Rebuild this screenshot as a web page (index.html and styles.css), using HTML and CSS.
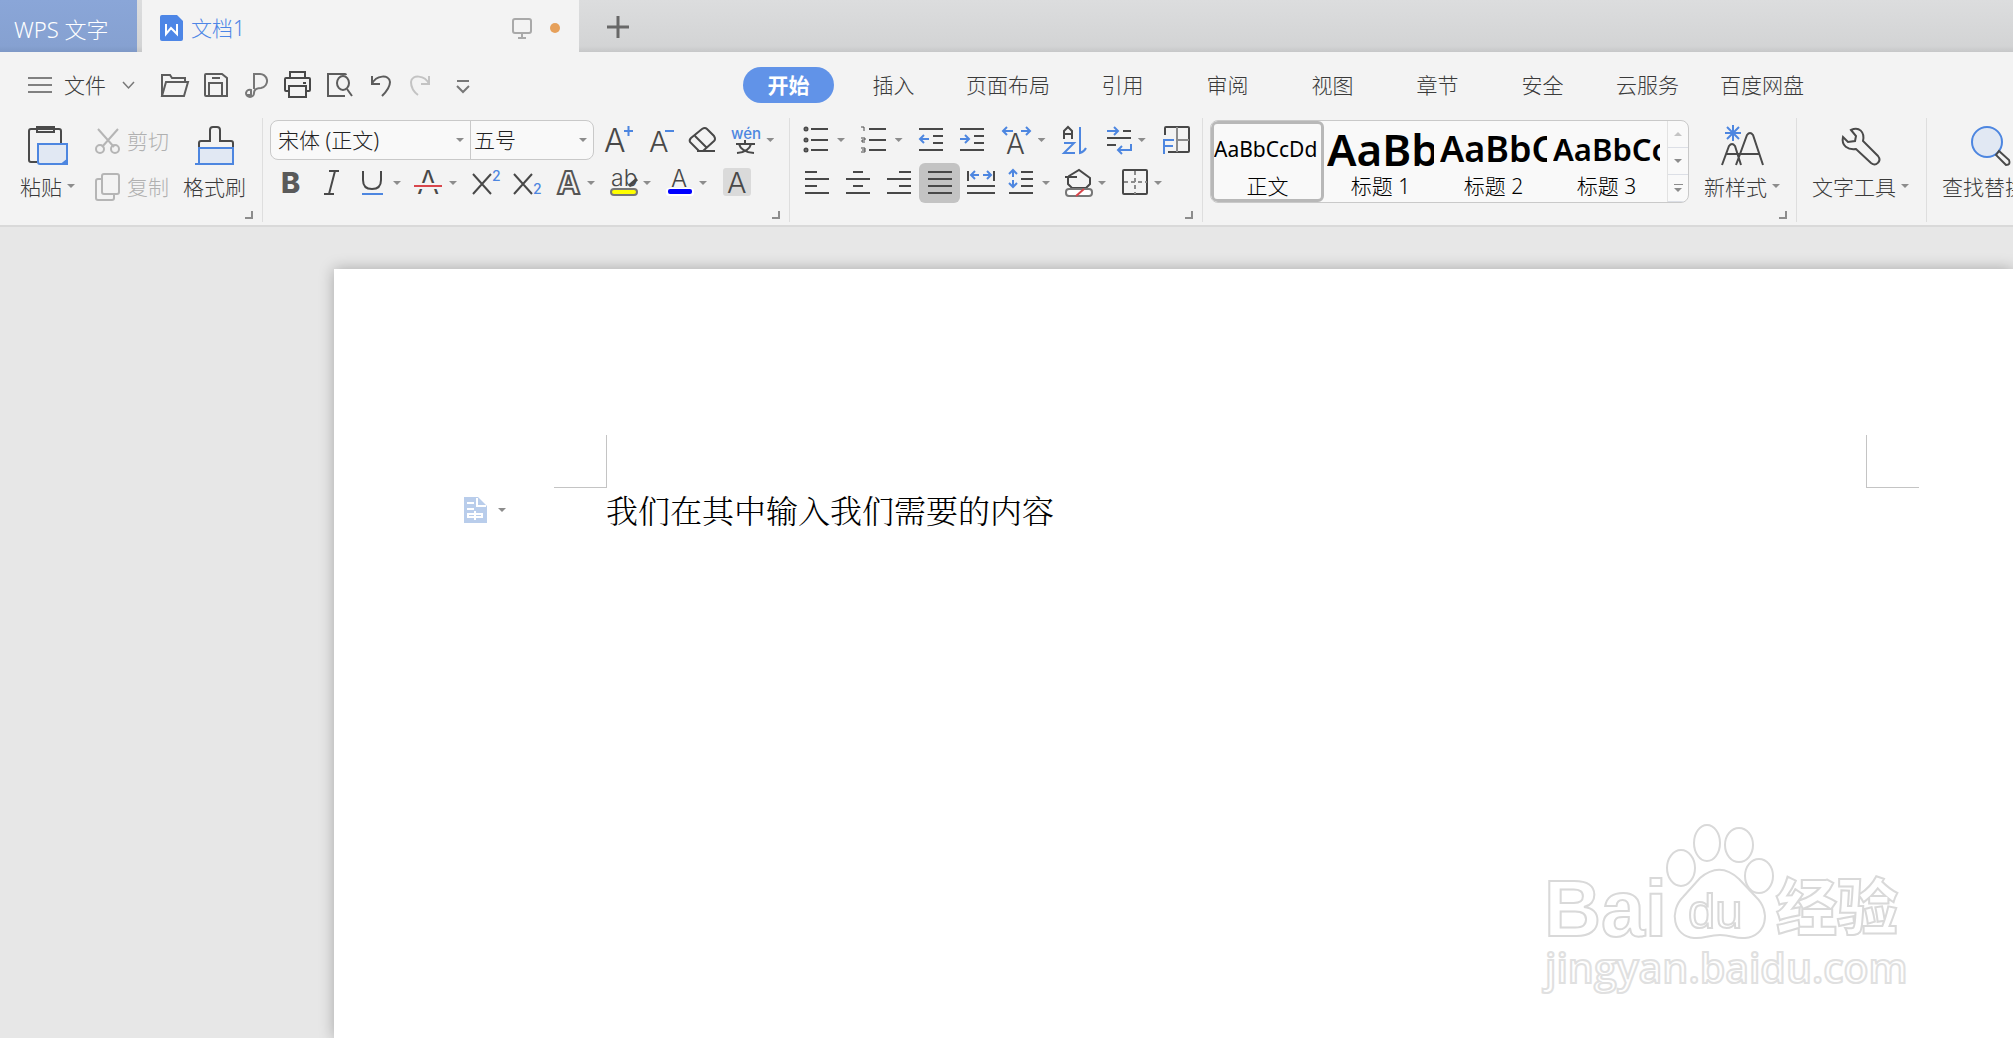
FILE: index.html
```html
<!DOCTYPE html>
<html lang="zh-CN">
<head>
<meta charset="utf-8">
<title>文档1 - WPS 文字</title>
<link rel="stylesheet" href="styles.css">
</head>
<body>
<header class="titlebar">
  <button class="app-tab">WPS 文字</button>
  <div class="doc-tab">
    <svg class="doc-logo" width="24" height="27" viewBox="0 0 24 27"><path fill="#4d86e6" d="M2 0h15l6 6v18a2 2 0 0 1-2 2H2a2 2 0 0 1-2-2V2a2 2 0 0 1 2-2z"/><path d="M6 9v10l5-6 6 6V9" fill="none" stroke="#fff" stroke-width="2"/></svg>
    <span class="doc-name">文档1</span>
    <svg class="monitor" width="21" height="21" viewBox="0 0 21 21" fill="none" stroke="#a9a9a9" stroke-width="2"><rect x="1" y="1" width="18" height="14" rx="2"/><path d="M10 15v5M6 20h8"/></svg>
    <span class="dot"></span>
  </div>
  <button class="new-tab" aria-label="新建"><svg width="22" height="22" viewBox="0 0 22 22"><path d="M11 0v22M0 11h22" stroke="#686868" stroke-width="3"/></svg></button>
</header>

<nav class="menubar">
  <div class="quick">
    <button class="file"><svg width="24" height="18" viewBox="0 0 24 18" stroke="#808080" stroke-width="2"><path d="M0 2h24M0 9h24M0 16h24"/></svg>文件<svg width="13" height="8" viewBox="0 0 13 8" fill="none" stroke="#777" stroke-width="1.5"><path d="M1 1l5.500 6L12 1"/></svg></button>
    <div class="quick-icons">
      <button aria-label="打开"><svg viewBox="0 0 28 28"><path d="M2 25V4h8l2 3h13v4M2 25L6 11h22l-4 14z"/></svg></button>
      <button aria-label="保存"><svg viewBox="0 0 28 28"><path d="M5 3h16l5 4v18H5q-1 0-1-1V4q0-1 1-1zM8 25V12h13v13M11 7h8"/></svg></button>
      <button aria-label="输出为PDF"><svg viewBox="0 0 28 28"><path stroke="#777" d="M12 18V3h5a7 7 0 0 1 2 14q-7 0-7 5a4 4 0 1 1-8 0q1-4 5-3v5H5"/></svg></button>
      <button aria-label="打印"><svg viewBox="0 0 28 28"><path stroke="#484848" d="M7 7V1h15v6M6 20H3q-1 0-1-1V8q0-1 1-1h23q1 0 1 1v11q0 1-1 1h-3M20 12h3M6 15h17v11H6z"/></svg></button>
      <button aria-label="打印预览"><svg viewBox="0 0 28 28"><path d="M22 4q0-1-1-1H4v22h17M23 18l5 7"/><ellipse cx="19" cy="12" rx="6" ry="7"/></svg></button>
      <button aria-label="撤销"><svg viewBox="0 0 28 28"><path d="M7 5v8h8M7 13c4-9 17-10 18-2 0 5-4 10-8 14"/></svg></button>
      <button aria-label="恢复"><svg viewBox="0 0 28 28"><path stroke="#c3c3c3" d="M23 5v8h-8M23 13C19 4 6 3 5 11c0 5 3 10 7 13"/></svg></button>
      <button aria-label="更多"><svg viewBox="0 0 28 28"><path stroke="#777" d="M10 10h12M10 15l6 6 6-6"/></svg></button>
    </div>
  </div>
  <div class="tabs">
    <button class="tab active"><span>开始</span></button>
    <button class="tab">插入</button>
    <button class="tab">页面布局</button>
    <button class="tab">引用</button>
    <button class="tab">审阅</button>
    <button class="tab">视图</button>
    <button class="tab">章节</button>
    <button class="tab">安全</button>
    <button class="tab">云服务</button>
    <button class="tab">百度网盘</button>
  </div>
</nav>

<section class="ribbon">
  <div class="group clipboard">
    <button class="big paste"><svg width="42" height="40" viewBox="0 0 42 40"><path fill="none" stroke="#4a4a4a" stroke-width="2" d="M10 36H4a2 2 0 0 1-2-2V5a2 2 0 0 1 2-2h28a2 2 0 0 1 2 2v13M10 1h17v5H10z"/><path fill="#e1e8f3" stroke="#4d86e0" stroke-width="2" d="M11 18h29v16l-5 4H13a2 2 0 0 1-2-2z"/><path fill="#4d86e0" d="M41 33v6h-7z"/></svg><span>粘贴<i class="caret"></i></span></button>
    <div class="stack">
      <button class="small"><svg width="26" height="28" viewBox="0 0 26 28" fill="none" stroke="#b5b5b5" stroke-width="2"><path d="M3 2l16 18M23 2L7 20"/><circle cx="5" cy="22" r="4"/><circle cx="20" cy="22" r="4"/></svg>剪切</button>
      <button class="small"><svg width="26" height="28" viewBox="0 0 26 28" fill="none" stroke="#b5b5b5" stroke-width="2"><rect x="7" y="1" width="17" height="20" rx="2"/><path d="M7 6H3a2 2 0 0 0-2 2v17a2 2 0 0 0 2 2h14q2 0 2-2v-4"/></svg>复制</button>
    </div>
    <button class="big brush"><svg width="40" height="40" viewBox="0 0 40 40"><path fill="none" stroke="#4a4a4a" stroke-width="2" d="M4 22v-5q0-2 2-2h9V4q0-3 3-3h4q3 0 3 3v11h11q2 0 2 2v5"/><path fill="#e1e8f3" stroke="none" d="M4 22h34v16H4z"/><path fill="none" stroke="#4d86e0" stroke-width="2" d="M0 38h38V22H4v16"/></svg><span>格式刷</span></button>
    <i class="launcher"></i>
  </div>

  <div class="group font-group">
    <div class="tools">
      <div class="combos">
        <label class="combo family"><select aria-label="字体"><option>宋体 (正文)</option></select><i class="caret"></i></label>
        <label class="combo size"><select aria-label="字号"><option>五号</option></select><i class="caret"></i></label>
      </div>
      <button class="tool wide" aria-label="增大字号"><svg viewBox="0 0 28 28"><text x="-2" y="26" font-size="32">A</text><path class="b" d="M18 5h9M22.500 0v10"/></svg></button>
      <button class="tool wide" aria-label="减小字号"><svg viewBox="0 0 28 28"><text x="1" y="26" font-size="29">A</text><path class="b" d="M17 5h9"/></svg></button>
      <button class="tool wide" aria-label="清除格式"><svg viewBox="0 0 28 28"><path d="M10 25l-9-9q-1-2 1-4L13 3q3-2 5 0l7 7q2 3 0 5L14 25H10M6 10l12 12M8 25h18"/></svg></button>
      <button class="tool split wide" aria-label="拼音指南"><svg viewBox="0 0 28 28"><text class="bt" x="0" y="13" font-size="15">wén</text><path d="M5 18h19M14 14v4M6 27q12-1 14-9M8 18q2 8 15 9"/></svg><i class="caret"></i></button>
    </div>
    <div class="tools">
      <button class="tool" aria-label="加粗"><svg viewBox="0 0 28 28"><text x="4" y="24" font-size="29" class="heavy">B</text></svg></button>
      <button class="tool" aria-label="倾斜"><svg viewBox="0 0 28 28"><path d="M11 2h10M6 25h10M17 2l-6 23"/></svg></button>
      <button class="tool split" aria-label="下划线"><svg viewBox="0 0 28 28"><path d="M5 2v9q0 9 9 9t9-9V2"/><path class="b" d="M4 25h21"/></svg><i class="caret"></i></button>
      <button class="tool split" aria-label="删除线"><svg viewBox="0 0 28 28"><text x="3" y="25" font-size="33">A</text><path d="M-1 17h30" class="gap"/><path d="M0 17h28" class="strike"/></svg><i class="caret"></i></button>
      <button class="tool" aria-label="上标"><svg viewBox="0 0 28 28"><path d="M2 5l18 20M20 5L2 25"/><text class="bt" x="21" y="12" font-size="14">2</text></svg></button>
      <button class="tool" aria-label="下标"><svg viewBox="0 0 28 28"><path d="M2 5l18 20M20 5L2 25"/><text class="bt" x="21" y="25" font-size="14">2</text></svg></button>
      <button class="tool split" aria-label="文字效果"><svg viewBox="0 0 28 28"><text x="5" y="25" font-size="31" class="outline">A</text></svg><i class="caret"></i></button>
      <button class="tool split" aria-label="突出显示"><svg viewBox="0 0 28 28"><text x="3" y="17" font-size="23">ab</text><path d="M21 17l8-7" class="nib"/><rect x="3" y="20" width="26" height="6" rx="3" class="marker"/></svg><i class="caret"></i></button>
      <button class="tool split" aria-label="字体颜色"><svg viewBox="0 0 28 28"><text x="7" y="18" font-size="24">A</text><rect x="2" y="19" width="28" height="8" rx="3" class="blank"/><rect x="4" y="20" width="24" height="5" rx="2" class="ink"/></svg><i class="caret"></i></button>
      <button class="tool" aria-label="字符底纹"><svg viewBox="0 0 28 28"><rect x="2" y="-1" width="28" height="28" rx="3" class="shade"/><text x="6" y="24" font-size="29">A</text></svg></button>
    </div>
    <i class="launcher"></i>
  </div>

  <div class="group para-group">
    <div class="tools loose">
      <button class="tool split" aria-label="项目符号"><svg viewBox="0 0 28 28"><path d="M9 3h17M9 14h17M9 24h17"/><circle cx="4" cy="3" r="1.500"/><circle cx="4" cy="14" r="1.500"/><circle cx="4" cy="24" r="1.500"/></svg><i class="caret"></i></button>
      <button class="tool split" aria-label="编号"><svg viewBox="0 0 28 28"><path d="M9 3h17M9 14h17M9 24h17"/><path class="thin" d="M1 1h3v4M1 12h4v2H2v2h3M1 22h4v4H1M2 24h3" /></svg><i class="caret"></i></button>
      <button class="tool" aria-label="减少缩进"><svg viewBox="0 0 28 28"><path d="M1 3h24M15 10h10M15 17h10M1 24h24"/><path class="b" d="M11 13H2M6 9l-4 4 4 4"/></svg></button>
      <button class="tool" aria-label="增加缩进"><svg viewBox="0 0 28 28"><path d="M0 3h24M14 10h10M14 17h10M0 24h24"/><path class="b" d="M0 13h9M5 9l4 4-4 4"/></svg></button>
      <button class="tool split" aria-label="字符缩放"><svg viewBox="0 0 28 28"><text x="3" y="28" font-size="28">A</text><path class="b" d="M10 5H0M4 1L0 5l4 4M18 5h9M23 1l4 4-4 4"/></svg><i class="caret"></i></button>
      <button class="tool" aria-label="排序"><svg viewBox="0 0 28 28"><path d="M4 13V5l4-4 4 4v8M4 8h8"/><path class="b" d="M4 17h10L4 27h11M20 1v26q4-1 6-5"/></svg></button>
      <button class="tool split" aria-label="显示标记"><svg viewBox="0 0 28 28"><path d="M20 5h8M4 12h24M4 19h9"/><path class="b" d="M4 5h11M11 1l4 4-4 4M28 18v6H15M19 20l-4 4 4 4"/></svg><i class="caret"></i></button>
      <button class="tool" aria-label="表格工具"><svg viewBox="0 0 28 28"><path d="M4 9V2q0-1 1-1h22q1 0 1 1v23q0 1-1 1H7"/><path d="M16 1v25M16 14h12" class="grid"/><path class="b" d="M3 28V14h10M3 20h9"/></svg></button>
    </div>
    <div class="tools">
      <button class="tool" aria-label="左对齐"><svg viewBox="0 0 28 28"><path d="M2 3h12M2 10h24M2 17h12M2 24h24"/></svg></button>
      <button class="tool" aria-label="居中"><svg viewBox="0 0 28 28"><path d="M9 3h10M2 10h24M9 17h10M2 24h24"/></svg></button>
      <button class="tool" aria-label="右对齐"><svg viewBox="0 0 28 28"><path d="M14 3h12M2 10h24M14 17h12M2 24h24"/></svg></button>
      <button class="tool pressed" aria-label="两端对齐"><svg viewBox="0 0 28 28"><path d="M2 3h24M2 10h24M2 17h24M2 24h24"/></svg></button>
      <button class="tool" aria-label="分散对齐"><svg viewBox="0 0 28 28"><path d="M1 2v10M27 2v10M0 17h28M0 24h28"/><path class="b" d="M12 6H5M8 2L4 6l4 4M16 6h7M20 2l4 4-4 4"/></svg></button>
      <button class="tool split" aria-label="行距"><svg viewBox="0 0 28 28"><path d="M14 3h12M14 10h12M14 17h12M2 24h24"/><path class="b" d="M6 1v7M2 5l4-4 4 4M6 11v7M2 14l4 4 4-4"/></svg><i class="caret"></i></button>
      <button class="tool split" aria-label="底纹颜色"><svg viewBox="0 0 28 28"><path d="M2 8h12M6 7L16 1l11 8v6l-4 4H9l-4-4V9z"/><rect x="3" y="20" width="26" height="7" rx="3" class="swatch"/><path d="M13 27l8-7" class="strike"/></svg><i class="caret"></i></button>
      <button class="tool split" aria-label="边框"><svg viewBox="0 0 28 28"><rect x="4" y="1" width="24" height="24" rx="1"/><path d="M16 2v23M5 13h23" class="grid dashed"/></svg><i class="caret"></i></button>
    </div>
    <i class="launcher"></i>
  </div>

  <div class="group style-group">
    <div class="gallery">
      <button class="style-item chosen"><span class="sample body">AaBbCcDd</span><span>正文</span></button>
      <button class="style-item"><span class="sample h1">AaBb</span><span>标题 1</span></button>
      <button class="style-item"><span class="sample h2">AaBbC</span><span>标题 2</span></button>
      <button class="style-item"><span class="sample h3">AaBbCc</span><span>标题 3</span></button>
      <div class="scroller">
        <button aria-label="上一行"><i class="caret up"></i></button>
        <button aria-label="下一行"><i class="caret"></i></button>
        <button class="more" aria-label="全部样式"><i class="caret"></i></button>
      </div>
    </div>
    <button class="big newstyle"><svg width="42" height="40" viewBox="0 0 42 40"><path fill="none" stroke="#4a4a4a" stroke-width="2" d="M1 39L8 20q3-4 6 0l6 19M15 39L26 9q3-4 6 0l10 30M5 28h33"/><path stroke="#4d86e0" stroke-width="2" d="M12-1v16M4 7h16M6 1l12 12M18 1L6 13"/></svg><span>新样式<i class="caret"></i></span></button>
    <i class="launcher"></i>
  </div>

  <div class="group tool-group">
    <button class="big"><svg width="40" height="40" viewBox="0 0 40 40"><path fill="none" stroke="#4a4a4a" stroke-width="2" d="M10 4l5 6-1 5-7 1-5-5c-2 9 5 13 13 12l15 14c5 4 11-2 7-7L22 15C24 6 18 0 10 4z"/></svg><span>文字工具<i class="caret"></i></span></button>
  </div>
  <div class="group find-group">
    <button class="big"><svg width="42" height="40" viewBox="0 0 42 40"><circle cx="17" cy="16" r="15" fill="#e1e8f3" stroke="#4d86e0" stroke-width="2"/><path fill="none" stroke="#4a4a4a" stroke-width="2" d="M26 29l3-4 10 9q2 5-3 5z"/></svg><span>查找替换<i class="caret"></i></span></button>
  </div>
</section>

<main class="workspace">
  <article class="page">
    <div class="marks"><i class="mark left"></i><i class="mark right"></i></div>
    <div class="line">
      <button class="section-btn" aria-label="段落布局"><svg width="23" height="26" viewBox="0 0 23 26"><path fill="#b9cdeb" d="M0 0h14l9 9v17H0z"/><path fill="none" stroke="#fff" stroke-width="2" d="M13 1v8h9M3 6h7M3 12h7M4 17h14v3H4zM11 14v9"/></svg><i class="caret"></i></button>
      <p class="text">我们在其中输入我们需要的内容</p>
    </div>
    <svg class="watermark" width="370" height="180" viewBox="0 0 370 180">
      <text x="4" y="115" font-size="79" class="wm-latin">Bai</text>
      <text x="236" y="109" font-size="61" class="wm-cjk">经验</text>
      <g class="wm-paw"><ellipse cx="141" cy="47" rx="14" ry="18"/><ellipse cx="167" cy="22" rx="13" ry="18"/><ellipse cx="199" cy="24" rx="14" ry="17"/><ellipse cx="219" cy="55" rx="14" ry="17"/><path d="M160 57q20-17 39 1l17 18c15 14 11 39-11 41-10 1-13-3-25-3s-16 4-26 3c-21-2-25-27-11-41z"/></g>
      <text x="148" y="107" font-size="49" class="wm-du">du</text>
      <text x="5" y="162" font-size="41" class="wm-url">jingyan.baidu.com</text>
    </svg>
  </article>
</main>
</body>
</html>
```
FILE: styles.css
```css
* { box-sizing: border-box; }
body {
  margin: 0;
  min-height: 100vh;
  display: flex;
  flex-direction: column;
  overflow: hidden;
  background: #e7e7e7;
  color: #3a3a3a;
  font: 300 21px/28px "Noto Sans", "Noto Sans CJK SC", sans-serif;
}
button {
  border: 0;
  padding: 0;
  background: none;
  color: inherit;
  font: inherit;
  white-space: nowrap;
}
svg { flex: none; overflow: visible; }

.titlebar {
  display: flex;
  height: 52px;
  background: linear-gradient(#dcddde, #d3d4d5 46px, #c6c7c8);
}
.app-tab {
  width: 137px;
  margin-right: 5px;
  padding: 6px 0 0 14px;
  text-align: left;
  color: #fff;
  font-size: 22px;
  background: linear-gradient(#8aa6d8, #86a1d1 46px, #7e98c6);
}
.doc-tab {
  display: flex;
  align-items: center;
  width: 437px;
  padding: 4px 19px 0 18px;
  background: #f3f3f3;
}
.doc-name { flex: 1; margin-left: 7px; color: #4d86e6; }
.dot { width: 10px; height: 10px; margin-left: 17px; border-radius: 50%; background: #e6a05a; }
.new-tab { display: flex; align-items: center; padding: 2px 0 0 28px; }

.menubar { display: flex; height: 58px; padding-top: 7px; background: #f3f3f3; }
.quick { display: flex; align-items: center; width: 736px; padding-left: 28px; }
.file { display: flex; align-items: center; gap: 12px; }
.file svg:last-child { margin-left: 4px; }
.quick-icons { display: flex; gap: 13px; margin-left: 25px; }
.quick-icons svg { display: block; width: 28px; height: 28px; fill: none; stroke: #5c5c5c; stroke-width: 2; }
.tabs { display: flex; align-items: center; }
.tab { min-width: 105px; padding: 0 20px; }
.tab.active { padding: 0 7px; color: #fff; font-weight: 700; }
.tab.active span { display: block; line-height: 36px; border-radius: 18px; background: #6193e8; }

.ribbon {
  display: flex;
  height: 117px;
  padding: 8px 0 3px;
  background: #f3f3f3;
  border-bottom: 2px solid #d9d9d9;
}
.group { position: relative; flex: none; padding: 2px 7px 0; border-right: 1px solid #dedede; }
.launcher {
  position: absolute;
  right: 9px;
  bottom: 3px;
  width: 8px;
  height: 8px;
  border: solid #8c8c8c;
  border-width: 0 2px 2px 0;
}
.caret {
  flex: none;
  display: inline-block;
  width: 8px;
  height: 4px;
  background: #8c8c8c;
  clip-path: polygon(0 0, 100% 0, 50% 100%);
}
.caret.up { clip-path: polygon(50% 0, 100% 100%, 0 100%); background: #c4c4c4; }

.clipboard { display: flex; width: 263px; padding-left: 20px; }
.big { display: flex; flex-direction: column; align-items: center; gap: 7px; height: 92px; padding-top: 6px; }
.big svg { height: 40px; }
.big .caret { margin-left: 5px; vertical-align: 7px; }
.stack { display: flex; flex-direction: column; gap: 18px; margin: 7px 0 0 20px; }
.small { display: flex; align-items: center; gap: 6px; color: #b0b0b0; }
.brush { margin-left: 14px; }

.font-group { width: 527px; }
.para-group { width: 413px; padding-left: 6px; }
.tools { display: flex; align-items: center; height: 40px; margin-bottom: 3px; }
.tools.loose { gap: 2px; }
.tool { display: flex; align-items: center; justify-content: center; width: 41px; height: 40px; }
.tool svg { width: 28px; height: 28px; fill: none; stroke: #484848; stroke-width: 2; }
.tool svg text { fill: #484848; stroke: none; font-family: Inter, sans-serif; font-weight: 300; }
.tool svg .b { stroke: #4d86e0; }
.tool svg .thin { stroke-width: 1; }
.tool svg .nib { stroke-width: 3; }
.tool svg .grid { stroke: #8c8c8c; }
.tool svg .dashed { stroke-dasharray: 4 3; }
.tool svg .gap { stroke: #f3f3f3; stroke-width: 6; }
.tool svg .strike { stroke: #d8464c; }
.tool svg .marker { fill: #ff0; stroke: #777; }
.tool svg .swatch { fill: #fff; stroke: #777; }
.tool svg .bt { fill: #4d86e0; font-weight: 500; }
.tool svg .heavy { font-weight: 800; fill: #5a5a5a; }
.tool svg .outline { fill: #f3f3f3; stroke: #555; font-weight: 700; }
.tool svg .blank { fill: #fff; stroke: none; }
.tool svg .ink { fill: #00f; stroke: none; }
.tool svg .shade { fill: #dadada; stroke: none; }
.tool.split { justify-content: flex-start; gap: 7px; width: 56px; padding-left: 6px; }
.tool.wide { width: 42px; }
.tool.split.wide { width: 58px; padding-left: 7px; }
.tool.pressed { background: #c3c3c3; border-radius: 6px; }
.combos {
  display: flex;
  height: 40px;
  margin-right: 5px;
  border: 1px solid #c9c9c9;
  border-radius: 8px;
  background: #f9f9f9;
}
.combo { display: flex; align-items: center; padding-right: 6px; }
.combo select {
  flex: 1;
  min-width: 0;
  height: 38px;
  padding: 0 0 0 7px;
  appearance: none;
  border: 0;
  background: none;
  color: #222;
  font: inherit;
}
.family { width: 200px; border-right: 1px solid #c9c9c9; }
.size { width: 122px; }
.size select { padding-left: 3px; }

.style-group { display: flex; width: 594px; }
.gallery {
  display: flex;
  width: 479px;
  height: 83px;
  border: 1px solid #c9c9c9;
  border-radius: 8px;
  background: #f9f9f9;
  overflow: hidden;
}
.style-item {
  width: 113px;
  padding: 0 3px;
  border: 3px solid transparent;
  border-width: 3px 0;
  color: #000;
}
.style-item.chosen { border: 3px solid #b8b8b8; border-radius: 6px; padding: 0; }
.style-item span { display: block; line-height: 26px; }
.style-item .sample { height: 48px; overflow: hidden; line-height: 48px; text-align: left; font-weight: 600; }
.style-item .body { font-weight: 400; }
.h1 { font-size: 44px; }
.h2 { font-size: 36px; }
.h3 { font-size: 31px; }
.scroller { display: flex; flex-direction: column; width: 21px; margin-left: auto; border-left: 1px solid #e2e2e2; }
.scroller button { flex: 1; display: flex; flex-direction: column; align-items: center; justify-content: center; gap: 3px; border-bottom: 1px solid #dcdfe6; }
.more::before { content: ""; width: 9px; height: 1px; background: #8c8c8c; }
.newstyle { margin-left: 15px; }
.tool-group { padding: 2px 0 0 15px; width: 130px; }
.find-group { padding-left: 15px; border-right: 0; }

.workspace { flex: 1; display: flex; padding: 42px 0 0 334px; }
.page {
  position: relative;
  flex: 1;
  padding-top: 166px;
  background: #fff;
  box-shadow: 0 0 14px rgba(0, 0, 0, .28);
}
.marks { display: flex; justify-content: space-between; padding: 0 94px 0 220px; }
.mark { width: 53px; height: 53px; border: 0 solid #c4c4c4; border-bottom-width: 1px; }
.mark.left { border-right-width: 1px; }
.mark.right { border-left-width: 1px; }
.line { display: flex; align-items: flex-start; padding-left: 130px; }
.section-btn { display: flex; align-items: center; gap: 11px; width: 142px; height: 44px; }
.text { margin: 0; color: #000; font: 300 32px/42px SimSun, "Noto Serif CJK SC", "Noto Sans CJK SC", serif; }

.watermark { position: absolute; top: 552px; right: 103px; fill: #fff; stroke: #d9d9d9; stroke-width: 2; }
.wm-latin, .wm-du { font-family: "Liberation Sans", sans-serif; font-weight: 700; }
.wm-du { font-weight: 400; }
.wm-cjk { font-family: "Noto Sans CJK SC", sans-serif; font-weight: 900; }
.wm-url { font-family: "Open Sans", sans-serif; font-weight: 600; stroke: #e0e0e0; }
```
